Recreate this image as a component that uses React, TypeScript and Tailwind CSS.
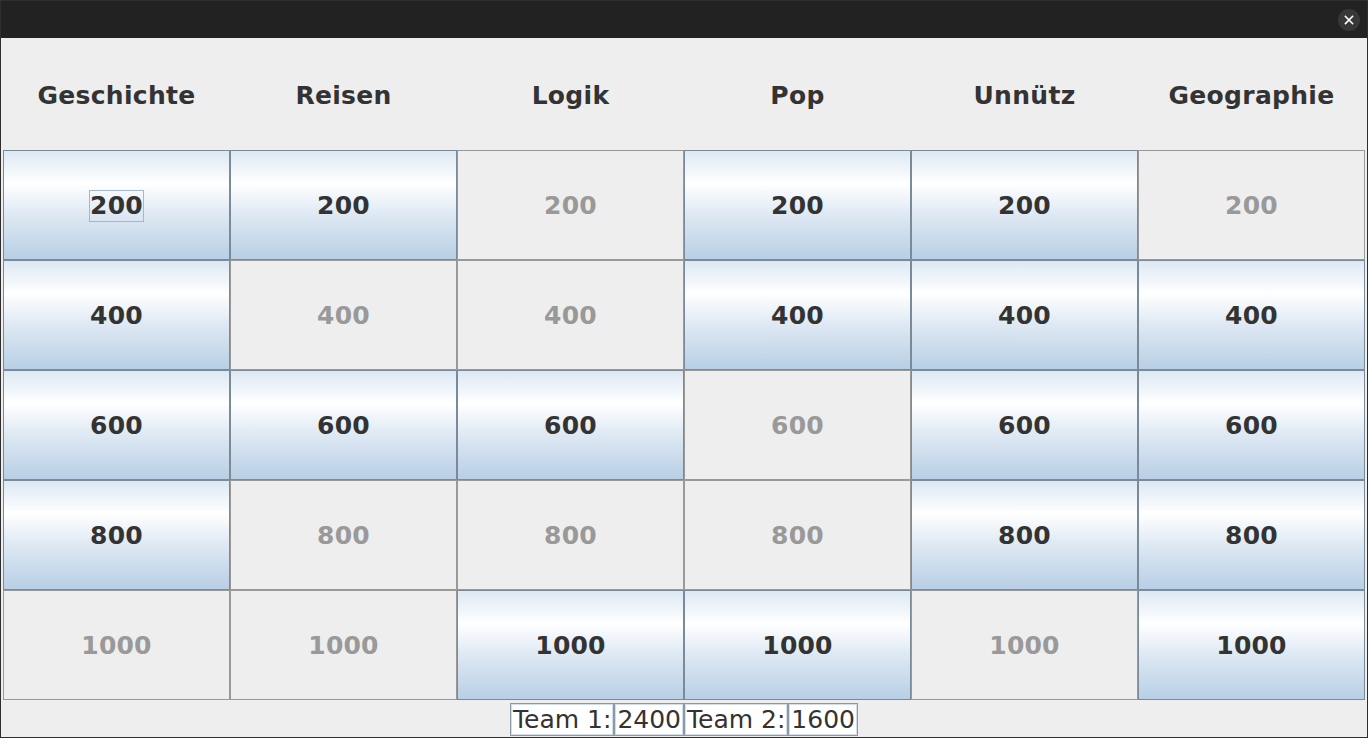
import React from "react";

const categories = ["Geschichte", "Reisen", "Logik", "Pop", "Unnütz", "Geographie"];
const values = [200, 400, 600, 800, 1000];

// which questions are already used, row by row
const used: boolean[][] = [
  [false, false, true, false, false, true],
  [false, true, true, false, false, false],
  [false, false, false, true, false, false],
  [false, true, true, true, false, false],
  [true, true, false, false, true, false],
];

const Cell = ({ value, disabled, focused }: { value: number; disabled: boolean; focused: boolean }) => {
  if (disabled) {
    return (
      <div className="h-[110px] border border-[#999999] bg-[#eeeeee] flex items-center justify-center pt-[2px] font-bold text-[25px] tracking-[0.2px] text-[#999999]">
        {value}
      </div>
    );
  }
  return (
    <div className="h-[110px] border border-[#7a8a99] bg-[linear-gradient(to_bottom,#dde8f3_0%,#ffffff_30%,#dde8f3_60%,#b8cfe5_100%)] flex items-center justify-center pt-[2px] font-bold text-[25px] tracking-[0.2px] text-[#333333]">
      <span className={`leading-[30px] ${focused ? "border border-[#a3b8cc]" : "border border-transparent"}`}>{value}</span>
    </div>
  );
};

const ScoreBox = ({ children }: { children: React.ReactNode }) => (
  <span className="border border-[#8a9aab] outline outline-1 -outline-offset-2 outline-[#d5dde6] px-[2px] leading-[31px] bg-white">
    {children}
  </span>
);

export default function App() {
  return (
    <div
      className="w-[1368px] h-[738px] flex flex-col bg-[#eeeeee] border border-[#2e2e2e] text-[#333333]"
      style={{ fontFamily: '"DejaVu Sans", "Liberation Sans", sans-serif' }}
    >
      <div className="h-[37px] bg-[#222222] flex items-center justify-end pr-[7px] shrink-0">
        <div className="w-[22px] h-[22px] rounded-full bg-[#383838] flex items-center justify-center mt-[1px]">
          <svg width="10" height="10" viewBox="0 0 10 10">
            <path d="M1.5 1.5 L8.5 8.5 M8.5 1.5 L1.5 8.5" stroke="#ffffff" strokeWidth="1.6" strokeLinecap="square" />
          </svg>
        </div>
      </div>
      <div className="pl-[2px] pr-[1px]">
        <div className="grid grid-cols-[repeat(6,227px)] h-[112px] items-center">
          {categories.map((c) => (
            <div key={c} className="text-center font-bold text-[25px] tracking-[0.3px] text-[#333333] pt-[3px]">
              {c}
            </div>
          ))}
        </div>
        <div className="grid grid-cols-[repeat(6,227px)]">
          {values.map((v, r) =>
            categories.map((c, col) => (
              <Cell key={`${c}-${v}`} value={v} disabled={used[r][col]} focused={r === 0 && col === 0} />
            ))
          )}
        </div>
      </div>
      <div className="flex-1 flex items-start justify-center pt-[3px] text-[25px] text-[#333333]">
        <ScoreBox>Team 1:</ScoreBox>
        <ScoreBox>2400</ScoreBox>
        <ScoreBox>Team 2:</ScoreBox>
        <ScoreBox>1600</ScoreBox>
      </div>
    </div>
  );
}
